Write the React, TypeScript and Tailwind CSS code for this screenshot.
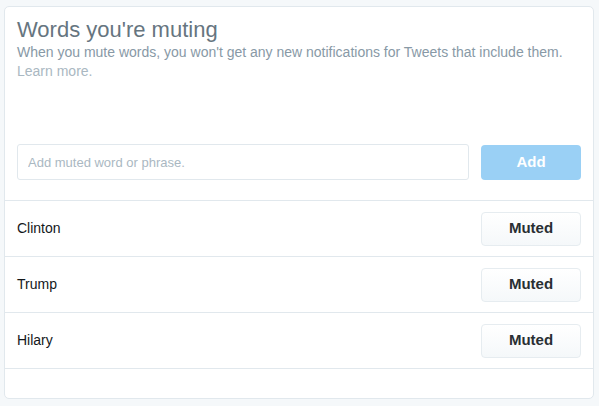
const MUTED_WORDS = ["Clinton", "Trump", "Hilary"];

export default function App() {
  return (
    <div
      className="h-[406px] w-[599px] bg-[#f5f8fa] px-[4px] pt-[6px]"
      style={{ fontFamily: '"Liberation Sans", Arial, sans-serif' }}
    >
      <div className="h-[393px] w-[590px] rounded-[5px] border border-[#e1e8ed] bg-white">
        <div className="border-b border-[#e1e8ed] px-3 pb-5 pt-[10px]">
          <h1 className="text-[22px] leading-[26px] text-[#66757f]">
            Words you're muting
          </h1>
          <p className="text-[14px] leading-[19px] text-[#8899a6]">
            When you mute words, you won't get any new notifications for Tweets
            that include them.{" "}
            <a className="text-[#aab8c2]">Learn more.</a>
          </p>
          <div className="mt-[63px] flex items-center gap-3">
            <input
              className="h-[36px] flex-1 rounded-[3px] border border-[#e1e8ed] px-[10px] text-[13px] text-[#14171a] outline-none placeholder:text-[#aab8c2]"
              placeholder="Add muted word or phrase."
            />
            <button className="h-[35px] w-[100px] rounded-[4px] bg-[#9ad0f5] text-[15px] font-bold text-white">
              Add
            </button>
          </div>
        </div>
        {MUTED_WORDS.map((word) => (
          <div
            key={word}
            className="flex h-[56px] items-center justify-between border-b border-[#e1e8ed] px-3"
          >
            <span className="text-[14px] text-[#14171a]">{word}</span>
            <button className="h-[34px] w-[100px] rounded-[4px] border border-[#e6ecf0] bg-gradient-to-b from-white to-[#f5f8fa] text-[15px] font-bold text-[#292f33]">
              Muted
            </button>
          </div>
        ))}
      </div>
    </div>
  );
}
